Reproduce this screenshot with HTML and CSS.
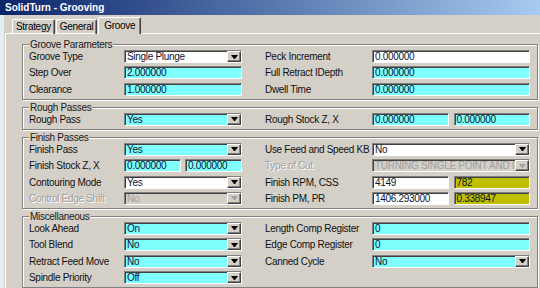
FILE: index.html
```html
<!DOCTYPE html>
<html lang="en">
<head>
    <meta charset="UTF-8">
    <title>SolidTurn - Grooving</title>
    <link rel="stylesheet" href="styles.css">
</head>
<body>
    <div class="window">
        <div class="titlebar">SolidTurn - Grooving</div>
        <div class="frame">
            <div class="tabs">
                <div class="tab">Strategy</div>
                <div class="tab">General</div>
                <div class="tab active">Groove</div>
            </div>
            <div class="panel">
                <div class="group">
                    <div class="group-title">Groove Parameters</div>
                    <div class="grid">
                        <span class="lbl">Groove Type</span>
                        <div class="combo white"><span class="val">Single Plunge</span><i class="btn"><b class="arrow"></b></i></div>
                        <span class="lbl right">Peck Increment</span>
                        <div class="field white">0.000000</div>

                        <span class="lbl">Step Over</span>
                        <div class="field cyan">2.000000</div>
                        <span class="lbl right">Full Retract IDepth</span>
                        <div class="field cyan">0.000000</div>

                        <span class="lbl">Clearance</span>
                        <div class="field cyan">1.000000</div>
                        <span class="lbl right">Dwell Time</span>
                        <div class="field cyan">0.000000</div>
                    </div>
                </div>

                <div class="group">
                    <div class="group-title">Rough Passes</div>
                    <div class="grid">
                        <span class="lbl">Rough Pass</span>
                        <div class="combo cyan"><span class="val">Yes</span><i class="btn"><b class="arrow"></b></i></div>
                        <span class="lbl right">Rough Stock Z, X</span>
                        <div class="pair wide">
                            <div class="field cyan">0.000000</div>
                            <div class="field cyan">0.000000</div>
                        </div>
                    </div>
                </div>

                <div class="group">
                    <div class="group-title">Finish Passes</div>
                    <div class="grid">
                        <span class="lbl">Finish Pass</span>
                        <div class="combo cyan"><span class="val">Yes</span><i class="btn"><b class="arrow"></b></i></div>
                        <span class="lbl right">Use Feed and Speed KB</span>
                        <div class="combo white"><span class="val">No</span><i class="btn"><b class="arrow"></b></i></div>

                        <span class="lbl">Finish Stock Z, X</span>
                        <div class="pair">
                            <div class="field cyan">0.000000</div>
                            <div class="field cyan">0.000000</div>
                        </div>
                        <span class="lbl right disabled">Type of Cut</span>
                        <div class="combo off"><span class="val">TURNING SINGLE POINT AND I</span><i class="btn"><b class="arrow"></b></i></div>

                        <span class="lbl">Contouring Mode</span>
                        <div class="combo white"><span class="val">Yes</span><i class="btn"><b class="arrow"></b></i></div>
                        <span class="lbl right">Finish RPM, CSS</span>
                        <div class="pair wide">
                            <div class="field white">4149</div>
                            <div class="field olive">782</div>
                        </div>

                        <span class="lbl disabled">Control Edge Shift</span>
                        <div class="combo off"><span class="val">No</span><i class="btn"><b class="arrow"></b></i></div>
                        <span class="lbl right">Finish PM, PR</span>
                        <div class="pair wide">
                            <div class="field white">1406.293000</div>
                            <div class="field olive">0.338947</div>
                        </div>
                    </div>
                </div>

                <div class="group">
                    <div class="group-title">Miscellaneous</div>
                    <div class="grid">
                        <span class="lbl">Look Ahead</span>
                        <div class="combo cyan"><span class="val">On</span><i class="btn"><b class="arrow"></b></i></div>
                        <span class="lbl right">Length Comp Register</span>
                        <div class="field cyan">0</div>

                        <span class="lbl">Tool Blend</span>
                        <div class="combo cyan"><span class="val">No</span><i class="btn"><b class="arrow"></b></i></div>
                        <span class="lbl right">Edge Comp Register</span>
                        <div class="field cyan">0</div>

                        <span class="lbl">Retract Feed Move</span>
                        <div class="combo cyan"><span class="val">No</span><i class="btn"><b class="arrow"></b></i></div>
                        <span class="lbl right">Canned Cycle</span>
                        <div class="combo cyan"><span class="val">No</span><i class="btn"><b class="arrow"></b></i></div>

                        <span class="lbl">Spindle Priority</span>
                        <div class="combo cyan"><span class="val">Off</span><i class="btn"><b class="arrow"></b></i></div>
                    </div>
                </div>
            </div>
        </div>
    </div>
</body>
</html>
```

FILE: styles.css
```css
body {
    margin: 0;
    background-color: #d4d0c8;
    font-family: 'Liberation Sans', Arial, sans-serif;
    font-size: 10px;
    letter-spacing: -0.3px;
    color: #000000;
}

.window {
    width: 540px;
    height: 288px;
    overflow: hidden;
}

.titlebar {
    height: 15px;
    line-height: 15px;
    padding-left: 5px;
    background: linear-gradient(to right, #0a246a, #a6caf0);
    color: #ffffff;
    font-weight: bold;
    letter-spacing: 0;
}

.frame {
    border-left: 4px solid #e6edf5;
    height: 273px;
}

/* tab strip */
.tabs {
    display: flex;
    align-items: flex-end;
    height: 19px;
    padding-left: 8px;
    margin-bottom: -1px;
}

.tab {
    height: 15px;
    line-height: 13px;
    padding: 0 3px;
    margin-right: 1px;
    box-sizing: border-box;
    border-top: 1px solid #ffffff;
    border-left: 1px solid #ffffff;
    border-right: 1px solid #404040;
    border-radius: 2px 2px 0 0;
    box-shadow: inset -1px 0 #808080;
}

.tab.active {
    position: relative;
    z-index: 1;
    height: 17px;
    line-height: 15px;
    padding: 0 5px;
    background-color: #d4d0c8;
}

.panel {
    margin-left: 1px;
    border-top: 1px solid #ffffff;
    border-left: 1px solid #ffffff;
    padding: 10px 2px 0 16px;
}

/* group boxes */
.group {
    border: 1px solid #808080;
    box-shadow: inset 1px 1px #ffffff, 1px 1px #ffffff;
    padding: 0 6px 3px;
    margin-bottom: 7px;
}

.group-title {
    width: max-content;
    margin-top: -6px;
    height: 11px;
    line-height: 11px;
    padding: 0 1px;
    background-color: #d4d0c8;
    color: #1a1a1a;
}

.grid {
    display: grid;
    grid-template-columns: 95px 118px 130px 158px;
    grid-auto-rows: 13px;
    row-gap: 3.4px;
}

.lbl {
    line-height: 13px;
    white-space: nowrap;
    color: #111111;
}

.lbl.right {
    padding-left: 23px;
}

.lbl.disabled {
    color: #a0a0a0;
    text-shadow: 1px 1px #ffffff;
}

/* inputs */
.field,
.combo {
    height: 13px;
    box-sizing: border-box;
    border: 1px solid;
    border-color: #808080 #ffffff #ffffff #808080;
    box-shadow: inset 1px 1px #404040;
    line-height: 11px;
    padding-left: 2px;
    white-space: nowrap;
    overflow: hidden;
    color: #0a1430;
}

.combo {
    display: flex;
    padding-right: 0;
}

.combo .val {
    flex: 1;
    overflow: hidden;
}

.combo .btn {
    width: 14px;
    height: 11px;
    box-sizing: border-box;
    border: 1px solid;
    border-color: #ffffff #404040 #404040 #ffffff;
    box-shadow: inset -1px -1px #808080;
    background-color: #d4d0c8;
    display: flex;
    align-items: center;
    justify-content: center;
}

.arrow {
    width: 1px;
    height: 0;
    border-left: 3px solid transparent;
    border-right: 3px solid transparent;
    border-top: 4px solid #000000;
}

.white {
    background-color: #ffffff;
}

.cyan {
    background-color: #80ffff;
}

.olive {
    background-color: #c0c000;
}

.combo.off {
    background-color: #d4d0c8;
    color: #a0a0a0;
}

.combo.off .arrow {
    border-top-color: #a0a0a0;
}

.pair {
    display: flex;
    gap: 4px;
}

.pair.wide {
    gap: 5px;
}

.pair .field {
    flex: 1;
}
```
